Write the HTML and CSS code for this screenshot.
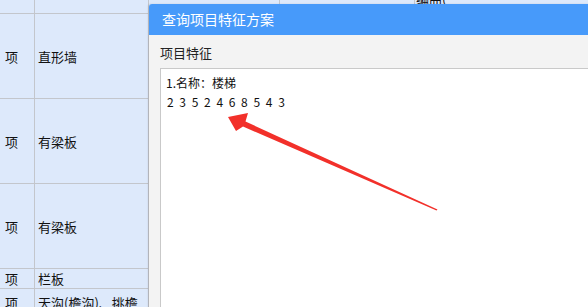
FILE: index.html
```html
<!DOCTYPE html>
<html lang="zh">
<head>
<meta charset="utf-8">
<link rel="stylesheet" href="styles.css">
</head>
<body>
<div class="sheet">
  <div class="cell top"></div><div class="cell top"></div><div class="cell top wide"></div><div class="cell top wide"></div><div class="cell top last"><span class="cut">编曲(</span></div>
  <div class="cell c1">项</div><div class="cell c2">直形墙</div><div class="cell rest"></div>
  <div class="cell c1">项</div><div class="cell c2">有梁板</div><div class="cell rest"></div>
  <div class="cell c1">项</div><div class="cell c2">有梁板</div><div class="cell rest"></div>
  <div class="cell c1">项</div><div class="cell c2">栏板</div><div class="cell rest"></div>
  <div class="cell c1">项</div><div class="cell c2">天沟(檐沟)、挑檐</div><div class="cell rest"></div>
</div>

<div class="dialog">
  <div class="dialog-head">查询项目特征方案</div>
  <div class="dialog-body">
    <div class="label">项目特征</div>
    <div class="box">
      <div class="line">1.名称：楼梯</div>
      <div class="line digits">2 3 5 2 4 6 8 5 4 3</div>
    </div>
  </div>
</div>

<svg class="arrow" width="588" height="307" viewBox="0 0 588 307">
  <polygon points="228,117 248,113 245.5,121.5 437.5,209.5 436.5,210.5 243,126.5 236,131" fill="#f2302a"/>
</svg>
</body>
</html>
```
FILE: styles.css
```css
html, body {
  margin: 0;
  padding: 0;
  width: 588px;
  height: 307px;
  overflow: hidden;
  background: #ffffff;
  font-family: "Noto Sans CJK SC", "Noto Sans", sans-serif;
}

body {
  position: relative;
}

.sheet {
  display: grid;
  grid-template-columns: 35px 113px 130px 134px 1fr;
  grid-template-rows: 14px 84px 84px 84px 19px 26px;
  background: #c3c6cc;
  gap: 1px;
  margin-top: -1px;
  margin-left: -1px;
  font-size: 13px;
  color: #111;
}

.cell {
  background: #dde9fb;
  display: flex;
  align-items: center;
  white-space: nowrap;
  overflow: hidden;
}

.cell.top {
  align-items: flex-start;
}

.cell.rest {
  grid-column: 3 / 6;
}

.c1 {
  padding-left: 6px;
}

.c2 {
  padding-left: 3px;
}

.cut {
  margin-top: -10px;
  padding-left: 1px;
  font-size: 13px;
}

.dialog {
  position: absolute;
  left: 149px;
  top: 4px;
  right: -10px;
  bottom: -10px;
  background: #f3f3f3;
  border-top-left-radius: 3px;
  box-shadow: -1px 0 2px rgba(0, 0, 0, 0.12);
  display: flex;
  flex-direction: column;
}

.dialog-head {
  height: 31px;
  background: #479afa;
  color: #ffffff;
  font-size: 14px;
  line-height: 31px;
  padding-left: 13px;
  border-top-left-radius: 3px;
}

.dialog-body {
  flex: 1;
  display: flex;
  flex-direction: column;
  padding: 8px 0 0 11px;
}

.label {
  font-size: 13px;
  color: #222;
  line-height: 20px;
  height: 25px;
}

.box {
  flex: 1;
  background: #ffffff;
  border: 1px solid #c9c9c9;
  padding: 4px 0 0 5px;
}

.line {
  font-size: 12px;
  color: #111;
  line-height: 19px;
}

.digits {
  padding-left: 1px;
  letter-spacing: 1.5px;
}

.arrow {
  position: absolute;
  left: 0;
  top: 0;
}
```
